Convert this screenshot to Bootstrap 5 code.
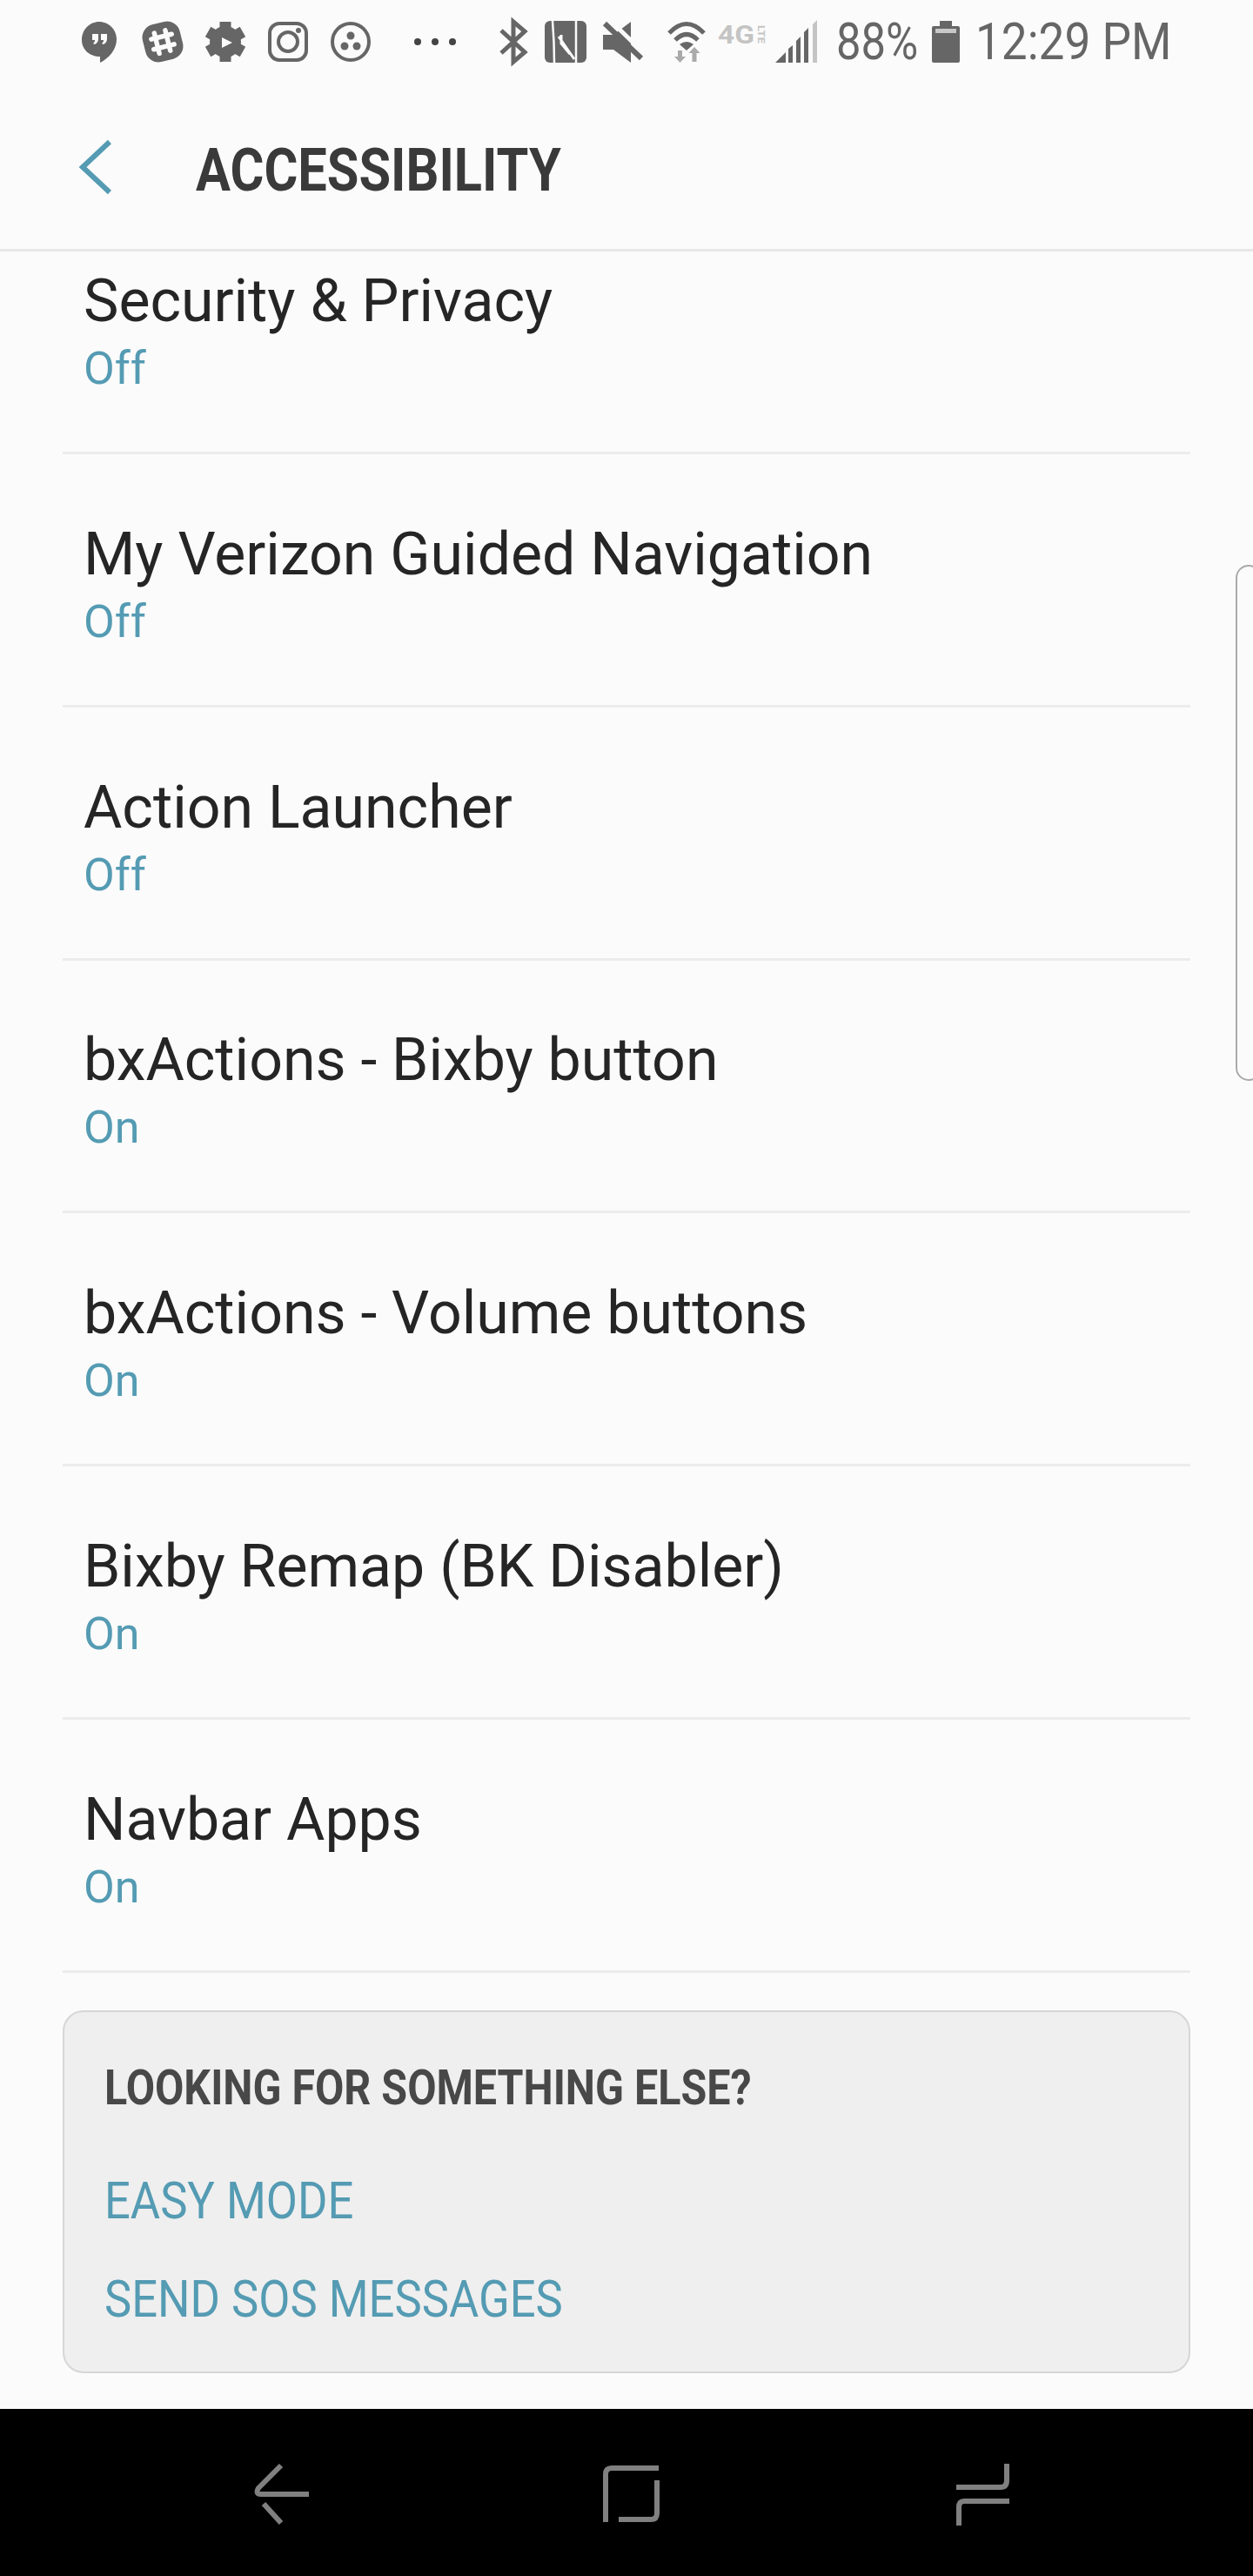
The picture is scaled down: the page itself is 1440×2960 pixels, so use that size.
<!DOCTYPE html>
<html lang="en">
<head>
    <meta charset="UTF-8">
    <title>Accessibility</title>
    <link href="https://cdn.jsdelivr.net/npm/bootstrap@5.3.0/dist/css/bootstrap.min.css" rel="stylesheet">
    <style>
        body { background: #fbfbfb; font-family: Roboto, "Liberation Sans", sans-serif; width: 1440px; height: 2960px; overflow: hidden; }
        .phone { height: 2960px; position: relative; }
        /* status bar */
        .status-bar { height: 96px; color: #666; }
        .status-bar svg { display: block; flex: none; }
        .batt-text { display: block; font-size: 59px; line-height: 96px; margin-left: 16px; width: 94px; transform: scaleX(.86); transform-origin: left center; white-space: nowrap; }
        .batt-icon { margin-left: 16px; }
        .clock-text { display: block; font-size: 59px; line-height: 96px; margin-left: 18px; width: 220px; transform: scaleX(.9); transform-origin: left center; white-space: nowrap; }
        /* header */
        .top-head { height: 193px; border-bottom: 3px solid #e7e7e7; padding-top: 2px; }
        .top-head svg { margin-left: 90px; }
        .head-title { font-size: 68px; font-weight: 700; color: #3a3a3a; margin: 8px 0 0 97px; line-height: 1; transform: scaleX(.875); transform-origin: left center; white-space: nowrap; }
        /* settings rows */
        .set-row { height: 290.8px; margin: 0 72px; padding: 0 24px 65px; border-bottom: 3px solid #ececec; }
        .set-row.first-row { height: 233px; }
        .row-name { font-size: 68px; line-height: 80px; color: #252525; white-space: nowrap; }
        .row-state { font-size: 52px; line-height: 60px; color: #549bb3; margin-top: 8px; }
        /* box at the bottom */
        .else-box { margin: 43px 72px 0; height: 417px; background: #efefef; border: 2px solid #d6d6d6; border-radius: 24px; padding: 54px 46px 0; }
        .else-title { font-size: 56px; font-weight: 700; color: #484848; line-height: 66px; margin: 0 0 62px; white-space: nowrap; transform: scaleX(.864); transform-origin: left center; }
        .else-link { display: block; font-size: 60px; line-height: 70px; color: #549bb3; text-decoration: none; margin-bottom: 43px; white-space: nowrap; transform: scaleX(.876); transform-origin: left center; }
        /* scroll handle on the right edge */
        .scroll-tab { position: absolute; left: 1420px; top: 649px; width: 30px; height: 593px; border: 2px solid #aaa; border-radius: 20px; }
        /* android keys */
        .key-bar { position: absolute; left: 0; right: 0; bottom: 0; height: 192px; background: #000; }
    </style>
</head>
<body>
<div class="phone">
    <div class="status-bar d-flex align-items-center">
        <svg width="560" height="96" viewBox="0 0 560 96">
            <!-- hangouts -->
            <path fill="#666" d="M114 25C103 25 94 34 94 46C94 57 103 65 115 65V72C125 67 134 57 134 45C134 34 125 25 114 25Z"/>
            <path fill="#fbfbfb" d="M106 39h7v6c0 3-2 5-4 6l-2-1c1-1 2-2 2-4h-3zM116 39h7v6c0 3-2 5-4 6l-2-1c1-1 2-2 2-4h-3z"/>
            <!-- slack -->
            <g transform="rotate(-14 187 48)">
                <rect x="165" y="26" width="44" height="44" rx="15" fill="#666"/>
                <path stroke="#fbfbfb" stroke-width="5.5" stroke-linecap="round" d="M180 36v24M193 36v24M175 42h24M175 54h24"/>
            </g>
            <!-- play games gear -->
            <g fill="#666">
                <circle cx="259" cy="48" r="18"/>
                <rect x="252.500" y="25" width="13" height="46"/>
                <rect x="252.500" y="25" width="13" height="46" transform="rotate(60 259 48)"/>
                <rect x="252.500" y="25" width="13" height="46" transform="rotate(120 259 48)"/>
            </g>
            <path fill="#fbfbfb" d="M255 43l12 6-12 6z"/>
            <!-- instagram -->
            <g fill="none" stroke="#666" stroke-width="4">
                <rect x="310" y="27" width="42" height="42" rx="11"/>
                <circle cx="331" cy="48" r="11"/>
            </g>
            <circle cx="343" cy="35" r="3" fill="#666"/>
            <!-- three dot circle -->
            <circle cx="403" cy="48" r="21" fill="none" stroke="#666" stroke-width="4"/>
            <circle cx="403" cy="41" r="4.500" fill="#666"/>
            <circle cx="396" cy="53" r="4.500" fill="#666"/>
            <circle cx="410" cy="53" r="4.500" fill="#666"/>
            <!-- more -->
            <circle cx="480" cy="48" r="4" fill="#444"/>
            <circle cx="500" cy="48" r="4" fill="#444"/>
            <circle cx="520" cy="48" r="4" fill="#444"/>
        </svg>
        <svg width="385" height="96" viewBox="560 0 385 96">
            <!-- bluetooth -->
            <path fill="none" stroke="#666" stroke-width="5" d="M576 35L603 60L590 71V25L603 36L576 61"/>
            <!-- nfc -->
            <rect x="626" y="24" width="48" height="48" rx="6" fill="#666"/>
            <path fill="none" stroke="#fbfbfb" stroke-width="2.500" d="M635 24Q637 48 637 72M662 24V72"/>
            <path fill="none" stroke="#fbfbfb" stroke-width="3" d="M642 42L660 68M645 40V50L655 62"/>
            <!-- mute -->
            <path fill="#666" d="M693 40h12l20-15v47l-20-15h-12z"/>
            <path stroke="#fbfbfb" stroke-width="5" d="M702 24L743 64"/>
            <path stroke="#666" stroke-width="6" d="M695 27L737 67"/>
            <!-- wifi -->
            <path fill="none" stroke="#666" stroke-width="5" d="M769 38Q789 17 809 38M776 46Q789 33 802 46"/>
            <path fill="#666" d="M781 51Q789 45 797 51L789 58z"/>
            <path fill="#aaa" d="M779 58h5v7h4l-6.500 7-6.500-7h4zM798 54l6.500 7h-4v10h-5V61h-4z"/>
            <!-- 4g lte -->
            <text x="825" y="50" font-family="Roboto, sans-serif" font-size="29" font-weight="700" fill="#c4c4c4" textLength="42" lengthAdjust="spacingAndGlyphs">4G</text>
            <text transform="translate(871 29) rotate(90)" font-family="Roboto, sans-serif" font-size="11" font-weight="700" fill="#c4c4c4" textLength="21" lengthAdjust="spacingAndGlyphs">LTE</text>
            <!-- signal -->
            <path fill="#666" d="M891 72L903 60V72zM906 56l5-4V72h-5zM915 47l5-5V72h-5zM924 37l5-5V72h-5z"/>
            <path fill="#c4c4c4" d="M934 28l5-5V72h-5z"/>
        </svg>
        <span class="batt-text">88%</span>
        <svg class="batt-icon" width="32" height="96" viewBox="0 0 32 96">
            <path fill="#666" d="M2 30h7v-6h14v6h7a2 2 0 0 1 2 2v38a2 2 0 0 1-2 2H2a2 2 0 0 1-2-2V32a2 2 0 0 1 2-2z"/>
            <rect x="4" y="33" width="24" height="5" fill="#c8c8c8"/>
        </svg>
        <span class="clock-text">12:29 PM</span>
    </div>

    <div class="top-head d-flex align-items-center">
        <svg width="38" height="64" viewBox="0 0 38 64"><path fill="none" stroke="#549bb3" stroke-width="6" d="M36 3L5 32L36 61"/></svg>
        <h1 class="head-title">ACCESSIBILITY</h1>
    </div>

    <div class="set-row first-row d-flex flex-column justify-content-end">
        <div class="row-name">Security &amp; Privacy</div>
        <div class="row-state">Off</div>
    </div>
    <div class="set-row d-flex flex-column justify-content-end">
        <div class="row-name">My Verizon Guided Navigation</div>
        <div class="row-state">Off</div>
    </div>
    <div class="set-row d-flex flex-column justify-content-end">
        <div class="row-name">Action Launcher</div>
        <div class="row-state">Off</div>
    </div>
    <div class="set-row d-flex flex-column justify-content-end">
        <div class="row-name">bxActions - Bixby button</div>
        <div class="row-state">On</div>
    </div>
    <div class="set-row d-flex flex-column justify-content-end">
        <div class="row-name">bxActions - Volume buttons</div>
        <div class="row-state">On</div>
    </div>
    <div class="set-row d-flex flex-column justify-content-end">
        <div class="row-name">Bixby Remap (BK Disabler)</div>
        <div class="row-state">On</div>
    </div>
    <div class="set-row d-flex flex-column justify-content-end">
        <div class="row-name">Navbar Apps</div>
        <div class="row-state">On</div>
    </div>

    <div class="else-box">
        <div class="else-title">LOOKING FOR SOMETHING ELSE?</div>
        <a class="else-link" href="#">EASY MODE</a>
        <a class="else-link" href="#">SEND SOS MESSAGES</a>
    </div>

    <div class="scroll-tab"></div>

    <div class="key-bar">
        <svg width="1440" height="192" viewBox="0 2768 1440 192">
            <g fill="none" stroke="#808080" stroke-width="6">
                <path d="M323 2833L297 2859Q293 2866 300 2866H355"/>
                <path d="M303 2877L323 2899"/>
                <path d="M696 2898V2843Q696 2836 703 2836H757M755 2850V2888Q755 2895 748 2895H711"/>
                <path d="M1157 2831V2850Q1157 2858 1150 2858H1099M1160 2874H1108Q1102 2874 1102 2881V2902"/>
            </g>
        </svg>
    </div>
</div>
<script src="https://cdn.jsdelivr.net/npm/bootstrap@5.3.0/dist/js/bootstrap.bundle.min.js"></script>
</body>
</html>
